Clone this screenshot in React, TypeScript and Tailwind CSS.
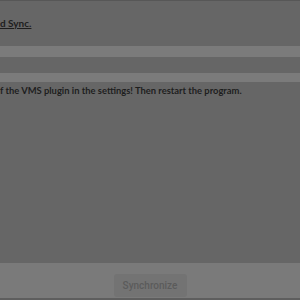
export default function App() {
    return (
        <div className="flex h-[300px] w-[300px] flex-col overflow-hidden border-t border-b-2 border-[#575757] border-b-[#5e5e5e] bg-[#666666] font-['Lato',sans-serif]">
            <div className="flex-1">
                <p className="mt-[14px] text-[10px] font-bold leading-[16px] text-[#1e1e1e] underline">
                    d Sync.
                </p>
                <div className="mt-[15px] h-[11px] bg-[#7b7b7b]" />
                <div className="mt-[16px] h-[9px] bg-[#7b7b7b]" />
                <p className="mt-[2px] whitespace-nowrap text-[9.4px] font-bold leading-[14px] text-[#1e1e1e]">
                    f the VMS plugin in the settings! Then restart the program.
                </p>
            </div>
            <div className="flex h-[35px] items-start justify-center bg-[#7a7a7a] pt-[11px]">
                <button className="h-[23px] w-[73px] rounded-[3px] bg-[#737373] font-['Roboto',sans-serif] text-[10px] font-medium text-[#5b5b5b]">
                    Synchronize
                </button>
            </div>
        </div>
    );
}
